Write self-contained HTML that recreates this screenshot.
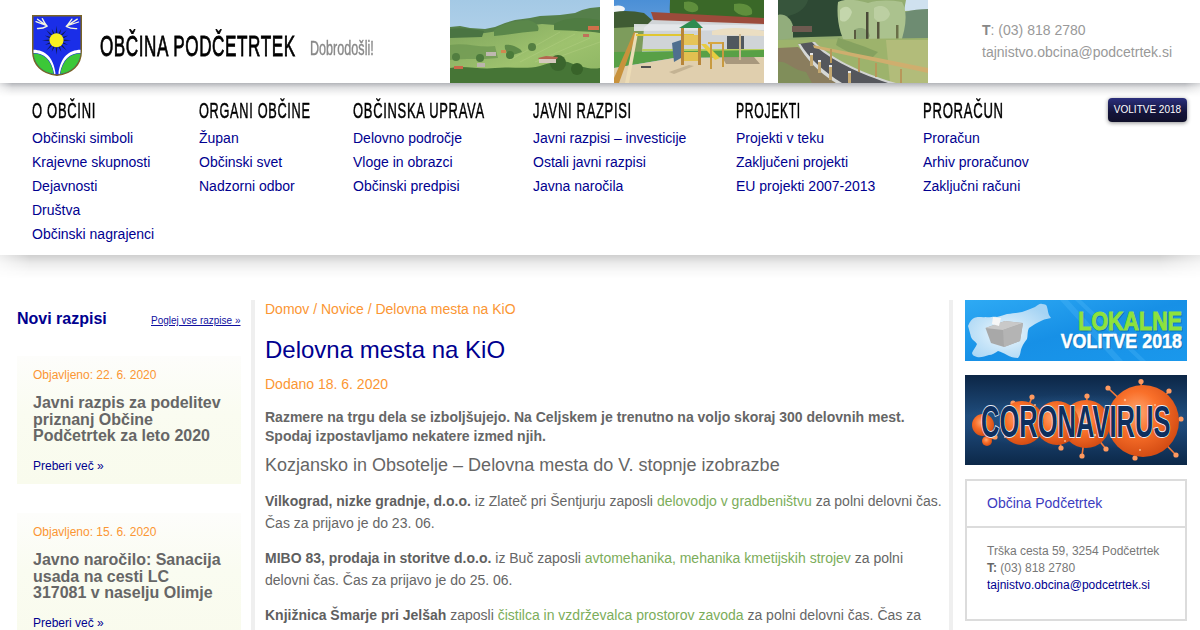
<!DOCTYPE html>
<html><head><meta charset="utf-8">
<style>
*{margin:0;padding:0;box-sizing:border-box}
html,body{width:1200px;height:630px;overflow:hidden;background:#fff;font-family:"Liberation Sans",sans-serif}
.a{position:absolute;white-space:nowrap}
.osw{font-family:"Liberation Sans",sans-serif;transform-origin:0 0;display:inline-block}
#hdr{position:absolute;left:0;top:0;width:1200px;height:83px;background:#fff;z-index:3}
#hshadow{position:absolute;left:0;top:83px;width:1200px;height:14px;z-index:3;background:linear-gradient(rgba(10,15,30,.31),rgba(10,15,30,.12) 35%,rgba(0,0,0,.03) 75%,rgba(0,0,0,0));-webkit-mask-image:linear-gradient(90deg,rgba(0,0,0,.4),#000 12px,#000 1185px,rgba(0,0,0,.5))}
#nav{position:absolute;left:0;top:83px;width:1200px;height:172px;background:#fff;z-index:2}
#nshadow{position:absolute;left:0;top:255px;width:1200px;height:24px;z-index:2;background:linear-gradient(rgba(0,0,0,.19),rgba(0,0,0,.08) 35%,rgba(0,0,0,.025) 70%,rgba(0,0,0,0));-webkit-mask-image:linear-gradient(90deg,rgba(0,0,0,.35),#000 30px,#000 1160px,rgba(0,0,0,.45))}
.nh{position:absolute;top:0;font-size:22px;color:#000}
.nl{position:absolute;font-size:14px;color:#00008f;line-height:24px}
.box{position:absolute;left:17px;width:224px;height:128px;background:linear-gradient(#fdfdfb,#fafcf1 45%,#f9fbed)}
.obj{position:absolute;left:16px;top:12px;font-size:12px;color:#fb9633;line-height:14px;white-space:nowrap}
.bt{position:absolute;left:16px;top:39px;font-size:16px;font-weight:700;color:#666;line-height:16.6px;white-space:nowrap}
.pv{position:absolute;left:16px;top:103px;font-size:12px;color:#00008f;line-height:14px;white-space:nowrap}
.mp{position:absolute;left:265px;width:682px;font-size:14px;color:#666;line-height:22px}
.mp b{color:#5f5f5f}
.g{color:#7cad5a}
</style></head><body>
<div id="hdr">
  <svg class="a" style="left:32px;top:15px" width="50" height="61" viewBox="0 0 50 61">
<path d="M0.75,0.75 H49.25 V36 C49.25,50 40,58.5 25,60.25 C10,58.5 0.75,50 0.75,36 Z" fill="#1a2ee8" stroke="#7a6424" stroke-width="1.5"/>
<path d="M31.00,26.20 L39.00,25.30 L31.00,24.40Z M30.16,28.62 L36.05,30.08 L30.85,26.96Z M28.46,30.53 L34.75,35.55 L29.73,29.26Z M26.16,31.65 L29.28,36.85 L27.82,30.96Z M23.60,31.80 L24.50,39.80 L25.40,31.80Z M21.18,30.96 L19.72,36.85 L22.84,31.65Z M19.27,29.26 L14.25,35.55 L20.54,30.53Z M18.15,26.96 L12.95,30.08 L18.84,28.62Z M18.00,24.40 L10.00,25.30 L18.00,26.20Z M18.84,21.98 L12.95,20.52 L18.15,23.64Z M20.54,20.07 L14.25,15.05 L19.27,21.34Z M22.84,18.95 L19.72,13.75 L21.18,19.64Z M25.40,18.80 L24.50,10.80 L23.60,18.80Z M27.82,19.64 L29.28,13.75 L26.16,18.95Z M29.73,21.34 L34.75,15.05 L28.46,20.07Z M30.85,23.64 L36.05,20.52 L30.16,21.98Z " fill="#101a50"/>
<circle cx="24.5" cy="25.3" r="7" fill="#f8f020"/>
<path d="M1.5,34.8 C13,35 21.5,42 23.6,58.8 L22.2,59 C19.5,44 12,38.2 1.5,38Z" fill="#fff"/>
<path d="M48.5,34.8 C37,35 28.5,42 26.4,58.8 L27.8,59 C30.5,44 38,38.2 48.5,38Z" fill="#fff"/>
<path d="M1.5,38.6 C12,38.8 19,44.5 21.8,59 C11,57.5 2.5,50 1.5,38.6Z" fill="#3cc838"/>
<path d="M48.5,38.6 C38,38.8 31,44.5 28.2,59 C39,57.5 47.5,50 48.5,38.6Z" fill="#3cc838"/>
<g fill="none" stroke="#f4f6e0" stroke-width="1.3" stroke-linecap="round">
<path d="M15.2,11.1 C13,9 11.5,6 10.3,3.6 M15.2,11.1 L5.5,4.2 M13.5,10.2 L4,6.6 M15.2,11.1 C12,13 8,13.6 5.5,13.5"/>
<path d="M34.2,11.4 C36.5,9 38.5,6 39.9,4.1 M34.2,11.4 L45.3,4.1 M36,10.3 L46.6,7 M34.2,11.4 C37.5,13.3 41.5,13.8 44.7,13.7"/>
</g>
</svg>
  <div class="a" style="left:100px;top:29px"><span class="osw" style="font-size:30px;-webkit-text-stroke:.8px #000;letter-spacing:1px;transform:scaleX(.57)">OBČINA PODČETRTEK</span></div>
  <div class="a" style="left:310px;top:37px"><span class="osw" style="font-size:20px;color:#888;-webkit-text-stroke:.4px #888;transform:scaleX(.63)">Dobrodošli!</span></div>
  <svg class="a" style="left:450px;top:0" width="150" height="83" viewBox="0 0 150 83">
<defs><linearGradient id="sk1" x1="0" y1="0" x2="0" y2="1"><stop offset="0" stop-color="#a4c9e5"/><stop offset="1" stop-color="#c0daee"/></linearGradient>
<linearGradient id="hl1" x1="0" y1="0" x2="1" y2="1"><stop offset="0" stop-color="#7ea45c"/><stop offset=".55" stop-color="#9ec26e"/><stop offset="1" stop-color="#8cb462"/></linearGradient></defs>
<rect width="150" height="83" fill="url(#sk1)"/>
<path d="M0,27 L10,26 L20,28 L35,29 L45,27 L55,23 L65,20 L80,18 L90,16 L110,15 L125,13 L132,10 L140,8 L150,7 L150,45 L0,45Z" fill="#557f4a"/>
<path d="M0,37 L20,34 L35,33 L48,31 L60,28 L75,26 L92,24 L105,25 L120,27 L135,29 L150,30 L150,83 L0,83Z" fill="url(#hl1)"/>
<path d="M0,29 C10,27 22,29 34,31 L32,37 L0,38Z" fill="#4a7442"/>
<path d="M44,30 C52,24 62,21 78,20 C86,22 90,26 88,31 C72,32 58,35 44,36Z" fill="#5a874a"/>
<path d="M104,24 C114,18 128,16 150,20 L150,33 C138,31 122,31 104,30Z" fill="#4f7c42"/>
<g stroke="#b4d084" stroke-width="1" opacity=".45"><line x1="60" y1="60" x2="110" y2="32"/><line x1="70" y1="62" x2="125" y2="34"/><line x1="85" y1="62" x2="140" y2="38"/><line x1="100" y1="60" x2="150" y2="42"/></g>
<path d="M0,45 C15,42 30,48 45,46 L48,58 C30,60 15,58 0,60Z" fill="#6f9852" opacity=".8"/>
<path d="M55,45 C62,44 70,48 72,52 L60,56 C56,52 54,48 55,45Z" fill="#5e8a48"/>
<path d="M0,68 C15,65 30,70 45,68 C60,66 75,70 90,66 C100,63 108,60 118,62 C128,66 140,70 150,68 L150,83 L0,83Z" fill="#467536"/>
<circle cx="108" cy="63" r="8" fill="#3b662d"/><circle cx="127" cy="69" r="6" fill="#386329"/><circle cx="60" cy="55" r="4" fill="#4a7a3a"/><circle cx="30" cy="58" r="4" fill="#4c7a3c"/><circle cx="6" cy="57" r="4" fill="#527e40"/><circle cx="82" cy="47" r="4" fill="#557f42"/>
<rect x="89" y="58" width="17" height="5" fill="#d4c8bc"/><path d="M88,58 L96,56 L108,57 L107,59 L89,59Z" fill="#b46650"/>
<rect x="138" y="26" width="11" height="4" fill="#d0704a"/><rect x="4" y="66" width="9" height="3" fill="#c8664a"/><rect x="27" y="63" width="8" height="4" fill="#bbb4ac"/><rect x="36" y="52" width="10" height="4" fill="#bfb8b0"/><rect x="51" y="50" width="5" height="3" fill="#d08850"/><rect x="133" y="34" width="6" height="3" fill="#c0705a"/>
</svg>
<svg class="a" style="left:614px;top:0" width="150" height="83" viewBox="0 0 150 83">
<defs><linearGradient id="sk2" x1="0" y1="0" x2="0" y2="1"><stop offset="0" stop-color="#4b8fd6"/><stop offset="1" stop-color="#8fbbe6"/></linearGradient></defs>
<rect width="150" height="83" fill="url(#sk2)"/>
<ellipse cx="4" cy="9" rx="7" ry="3.5" fill="#f2f5f8"/>
<path d="M56,0 L150,0 L150,22 L57,20 C55,12 56,6 56,0Z" fill="#3a6828"/>
<path d="M70,2 C78,0 86,4 84,10 C80,14 72,12 70,8Z M120,4 C130,2 140,6 138,14 C132,18 122,14 120,10Z" fill="#5f8f3c"/>
<path d="M0,12 C10,10 20,11 30,13 L38,20 L38,32 L0,34Z" fill="#3f5b33"/>
<path d="M0,28 L36,26 L36,52 L0,54Z" fill="#7d9c5c"/>
<path d="M37,12 L150,18 L150,25 L40,21Z" fill="#9c4b3b"/>
<path d="M38,20 L150,24 L150,50 L28,52 L30,28Z" fill="#d0d4d7"/>
<path d="M20,24 L150,25 L150,30 L20,31Z" fill="#e6e9ec" opacity=".9"/>
<rect x="113" y="36" width="17" height="13" fill="#50585e"/>
<rect x="28" y="49" width="122" height="2" fill="#b8d060"/>
<path d="M0,52 L150,50 L150,57 L60,58 L0,68Z" fill="#58a046"/>
<path d="M0,68 L60,58 L150,57 L150,83 L0,83Z" fill="#e0cfae"/>
<path d="M108,57 L140,57 L146,64 L112,64Z" fill="#9a8a70" opacity=".8"/>
<path d="M55,72 L75,65 L80,66 L60,74Z" fill="#b8a688" opacity=".7"/>
<path d="M0,78 L20,32 L23,33 L5,83 L0,83Z" fill="#c8923c"/>
<path d="M11,83 L21,33 L24,33 L15,83Z" fill="#ecdcb6"/>
<rect x="22" y="34" width="58" height="2" fill="#e0c630"/>
<rect x="27" y="66" width="10" height="2" fill="#505050"/>
<path d="M65,28 L80,19 L89,28Z" fill="#2f8c50"/>
<rect x="67" y="28" width="3" height="37" fill="#b8863a"/><rect x="84" y="28" width="3" height="37" fill="#b8863a"/>
<rect x="70" y="35" width="14" height="10" fill="#e6c458"/><rect x="70" y="52" width="14" height="9" fill="#e2c050"/>
<path d="M58,43 L67,40 L67,58 L60,62Z" fill="#4f6f8f"/>
<path d="M87,44 L92,44 L106,58 L101,60Z" fill="#e8cc40"/>
<rect x="94" y="42" width="16" height="2" fill="#d8a840"/><rect x="108" y="42" width="2" height="25" fill="#c89a40"/><rect x="96" y="44" width="2" height="25" fill="#c89a40"/>
<path d="M98,31 C110,27 132,27 150,31 L150,36 L98,35Z" fill="#ebdec2"/>
<rect x="125" y="34" width="2" height="26" fill="#cdb890"/>
</svg>
<svg class="a" style="left:778px;top:0" width="150" height="83" viewBox="0 0 150 83">
<rect width="150" height="83" fill="#93ad70"/>
<path d="M0,0 L72,0 L66,36 L0,38Z" fill="#2e4934"/>
<path d="M0,0 L30,0 C28,8 20,14 10,16 L0,16Z" fill="#37553c"/>
<path d="M128,0 L150,0 L150,10 L126,11Z" fill="#cfe1ef"/>
<path d="M104,22 C118,13 134,9 150,9 L150,42 L104,42Z" fill="#6e8c72"/>
<path d="M60,2 C68,-2 80,0 90,3 C100,0 112,0 124,2 C130,12 128,28 122,45 L100,50 L72,48 C62,40 58,18 60,2Z" fill="#abc28e"/>
<path d="M62,10 C66,5 72,6 74,12 C72,20 66,24 62,20Z" fill="#c4d6ac"/>
<path d="M96,8 C102,4 110,6 112,14 C110,22 100,24 96,18Z" fill="#bccfa2"/>
<path d="M76,30 C82,26 90,28 92,36 C88,42 80,44 76,40Z" fill="#8fa878"/>
<path d="M0,15 C6,13 13,18 15,26 L15,38 L0,40Z" fill="#92ad7c"/>
<rect x="14" y="26" width="20" height="6" fill="#6e5a50"/>
<rect x="88" y="12" width="2.5" height="52" fill="#4a4a38"/><rect x="99" y="22" width="2.5" height="40" fill="#55553c"/><rect x="118" y="25" width="2.5" height="34" fill="#6a7048"/><rect x="76" y="30" width="2" height="25" fill="#5a5a40"/>
<path d="M0,40 L150,38 L150,83 L0,83Z" fill="#9db36c"/>
<path d="M108,40 L150,40 L150,83 L112,83Z" fill="#b2bc7a"/>
<path d="M60,38 C75,42 90,48 100,52 L92,60 C78,56 66,50 58,45Z" fill="#7a9a5a" opacity=".7"/>
<path d="M0,48 L20,47 L60,83 L0,83Z" fill="#8a7d5e"/>
<path d="M0,62 C8,60 15,70 28,72 L34,83 L0,83Z" fill="#7a9a58" opacity=".6"/>
<path d="M20,44 L35,42 C46,55 72,70 112,83 L62,83 C46,72 30,58 20,44Z" fill="#55575c"/>
<path d="M34,42 L37,42 C50,56 80,72 118,83 L110,83 C74,71 46,56 34,42Z" fill="#d2d4d2"/>
<path d="M20,44 L22.5,44 C30,57 46,72 64,83 L58,83 C40,72 27,58 20,44Z" fill="#d6d8d6"/>
<path d="M35,45 L150,68 L150,73 L36,48Z" fill="#cfae6e"/>
<rect x="52" y="49" width="2" height="14" fill="#b8975a"/><rect x="80" y="58" width="2" height="14" fill="#b8975a"/><rect x="97" y="63" width="2" height="14" fill="#b8975a"/><rect x="122" y="69" width="2" height="14" fill="#b8975a"/>
<rect x="32" y="54" width="3" height="12" fill="#c4a870"/><rect x="40" y="61" width="3" height="12" fill="#c4a870"/><rect x="51" y="66" width="3" height="14" fill="#c4a870"/><rect x="70" y="72" width="3" height="11" fill="#c4a870"/>
<rect x="32" y="53" width="3" height="2" fill="#e8e8e8"/><rect x="40" y="60" width="3" height="2" fill="#e8e8e8"/><rect x="51" y="65" width="3" height="2" fill="#e8e8e8"/><rect x="70" y="71" width="3" height="2" fill="#e8e8e8"/>
</svg>
  <div class="a" style="left:982px;top:19px;font-size:14px;color:#999;line-height:22px"><b style="color:#888">T</b>: (03) 818 2780<br>tajnistvo.obcina@podcetrtek.si</div>
</div>
<div id="hshadow"></div>
<div id="nav">
<div class="a" style="left:32px;top:15px"><span class="osw" style="font-size:22px;-webkit-text-stroke:.5px #000;letter-spacing:1.2px;transform:scaleX(0.5894)">O OBČINI</span></div>
<div class="nl" style="left:32px;top:43px">Občinski simboli<br>Krajevne skupnosti<br>Dejavnosti<br>Društva<br>Občinski nagrajenci</div>
<div class="a" style="left:199px;top:15px"><span class="osw" style="font-size:22px;-webkit-text-stroke:.5px #000;letter-spacing:1.2px;transform:scaleX(0.5792)">ORGANI OBČINE</span></div>
<div class="nl" style="left:199px;top:43px">Župan<br>Občinski svet<br>Nadzorni odbor</div>
<div class="a" style="left:353px;top:15px"><span class="osw" style="font-size:22px;-webkit-text-stroke:.5px #000;letter-spacing:1.2px;transform:scaleX(0.5888)">OBČINSKA UPRAVA</span></div>
<div class="nl" style="left:353px;top:43px">Delovno področje<br>Vloge in obrazci<br>Občinski predpisi</div>
<div class="a" style="left:533px;top:15px"><span class="osw" style="font-size:22px;-webkit-text-stroke:.5px #000;letter-spacing:1.2px;transform:scaleX(0.5886)">JAVNI RAZPISI</span></div>
<div class="nl" style="left:533px;top:43px">Javni razpisi – investicije<br>Ostali javni razpisi<br>Javna naročila</div>
<div class="a" style="left:736px;top:15px"><span class="osw" style="font-size:22px;-webkit-text-stroke:.5px #000;letter-spacing:1.2px;transform:scaleX(0.5541)">PROJEKTI</span></div>
<div class="nl" style="left:736px;top:43px">Projekti v teku<br>Zaključeni projekti<br>EU projekti 2007-2013</div>
<div class="a" style="left:923px;top:15px"><span class="osw" style="font-size:22px;-webkit-text-stroke:.5px #000;letter-spacing:1.2px;transform:scaleX(0.5964)">PRORAČUN</span></div>
<div class="nl" style="left:923px;top:43px">Proračun<br>Arhiv proračunov<br>Zaključni računi</div>
<div class="a" id="vol" style="left:1108px;top:15px;width:79px;height:24px;border-radius:4px;background:linear-gradient(#2b2f7c,#14143a 60%,#10102a);box-shadow:0 1px 4px rgba(0,0,0,.45);color:#fff;font-size:10px;line-height:24px;text-align:center">VOLITVE 2018</div>
</div>
<div id="nshadow"></div>
<div class="a" style="left:251px;top:300px;width:4px;height:330px;background:#efefef"></div>
<div class="a" style="left:949px;top:300px;width:4px;height:330px;background:#efefef"></div>
<!-- left sidebar -->
<div class="a" style="left:17px;top:309px;font-size:16px;font-weight:700;color:#00008f;line-height:20px">Novi razpisi</div>
<div class="a" style="left:151px;top:314px;font-size:10px;color:#1010a0;line-height:14px;text-decoration:underline">Poglej vse razpise »</div>
<div class="box" style="top:356px">
 <div class="obj">Objavljeno: 22. 6. 2020</div>
 <div class="bt">Javni razpis za podelitev<br>priznanj Občine<br>Podčetrtek za leto 2020</div>
 <div class="pv">Preberi več »</div>
</div>
<div class="box" style="top:513px">
 <div class="obj">Objavljeno: 15. 6. 2020</div>
 <div class="bt">Javno naročilo: Sanacija<br>usada na cesti LC<br>317081 v naselju Olimje</div>
 <div class="pv">Preberi več »</div>
</div>
<!-- main -->
<div class="a" style="left:265px;top:300px;font-size:14px;color:#fb9633;line-height:18px">Domov / Novice / Delovna mesta na KiO</div>
<div class="a" style="left:265px;top:335px;font-size:24px;color:#00008f;line-height:30px">Delovna mesta na KiO</div>
<div class="a" style="left:265px;top:375px;font-size:14px;color:#fb9633;line-height:18px">Dodano 18. 6. 2020</div>
<div class="a" style="left:265px;top:408px;font-size:14px;font-weight:700;color:#666;line-height:19px">Razmere na trgu dela se izboljšujejo. Na Celjskem je trenutno na voljo skoraj 300 delovnih mest.<br>Spodaj izpostavljamo nekatere izmed njih.</div>
<div class="a" style="left:265px;top:454px;font-size:18px;color:#666;line-height:22px">Kozjansko in Obsotelje – Delovna mesta do V. stopnje izobrazbe</div>
<div class="mp" style="top:490px"><b>Vilkograd, nizke gradnje, d.o.o.</b> iz Zlateč pri Šentjurju zaposli <span class="g">delovodjo v gradbeništvu</span> za polni delovni čas. Čas za prijavo je do 23. 06.</div>
<div class="mp" style="top:547px"><b>MIBO 83, prodaja in storitve d.o.o.</b> iz Buč zaposli <span class="g">avtomehanika, mehanika kmetijskih strojev</span> za polni delovni čas. Čas za prijavo je do 25. 06.</div>
<div class="mp" style="top:604px"><b>Knjižnica Šmarje pri Jelšah</b> zaposli <span class="g">čistilca in vzdrževalca prostorov zavoda</span> za polni delovni čas. Čas za prijavo je do 26. 06.</div>


<!-- right sidebar -->
<svg class="a" style="left:965px;top:300px" width="222" height="61" viewBox="0 0 222 61">
<defs>
<linearGradient id="b1g" x1="0" y1="0" x2="1" y2="1"><stop offset="0" stop-color="#2eaaf4"/><stop offset=".5" stop-color="#1790e6"/><stop offset="1" stop-color="#1a98ec"/></linearGradient>
<radialGradient id="mapg" cx=".45" cy=".55" r=".6"><stop offset="0" stop-color="#f0f8fd"/><stop offset=".55" stop-color="#c4e3f8"/><stop offset="1" stop-color="#a6d4f4"/></radialGradient>
</defs>
<rect width="222" height="61" fill="url(#b1g)"/>
<path d="M95,0 L150,61 L158,61 L103,0Z M110,0 L175,61 L181,61 L116,0Z" fill="#5cc0fa" opacity=".25"/>
<path d="M3,26 C5,21 7,19 9,18 C14,16 17,18 20.5,17 C25,18 28,16 32,17 C36,16 39,15 42,14 C48,13 52,13 57,12 C62,10 66,9 70,7 C73,5 75,3 77,4 C80,4 82,5 82,7 C83,10 83,13 84,15 L86,18 C83,19 80,19 77,20.5 C72,23 68,25 64,28 C62,32 63,36 62,39 C60,42 58,44 57,47 C55,51 56,55 53,58 C49,58 45,57 42,55 C39,53 36,52 33,51 C30,53 27,55 24,55 C20,56 16,58 12,57 C9,56 7,55 7,53 C8,50 11,47 12,44 C10,41 7,40 6,37 C5,33 4,29 3,26Z" fill="url(#mapg)"/>
<path d="M20.5,28 L40,21 L58,23 L55,41 L39,47 L26,43Z" fill="#a8a8a8"/>
<path d="M20.5,28 L40,21 L58,23 L38,30Z" fill="#c9c9c9"/>
<path d="M38,30 L58,23 L55,41 L39,47Z" fill="#b4b4b4"/>
<path d="M28,17 L36,18 L34,26 L27,24Z" fill="#f6f6f6"/>
<g transform="translate(1 1)" opacity=".35"><text x="217" y="30" text-anchor="end" font-family="Liberation Sans" font-weight="700" font-size="26" fill="#003a70" stroke="#003a70" stroke-width="1" transform="translate(217 0) scale(.825 1) translate(-217 0)">LOKALNE</text>
<text x="217" y="48" text-anchor="end" font-family="Liberation Sans" font-weight="700" font-size="20" fill="#003a70" stroke="#003a70" stroke-width=".5" transform="translate(217 0) scale(.895 1) translate(-217 0)">VOLITVE 2018</text></g>
<text x="217" y="30" text-anchor="end" font-family="Liberation Sans" font-weight="700" font-size="26" fill="#8ee23c" stroke="#8ee23c" stroke-width="1" transform="translate(217 0) scale(.825 1) translate(-217 0)">LOKALNE</text>
<text x="217" y="48" text-anchor="end" font-family="Liberation Sans" font-weight="700" font-size="20" fill="#fff" stroke="#fff" stroke-width=".5" transform="translate(217 0) scale(.895 1) translate(-217 0)">VOLITVE 2018</text>
</svg>
<svg class="a" style="left:965px;top:375px" width="222" height="90" viewBox="0 0 222 90">
<defs>
<linearGradient id="b2g" x1="0" y1="0" x2="0" y2="1"><stop offset="0" stop-color="#0c2646"/><stop offset=".45" stop-color="#1f4c7c"/><stop offset=".6" stop-color="#1c4676"/><stop offset="1" stop-color="#0c2848"/></linearGradient>
<radialGradient id="glow" cx=".5" cy=".5" r=".5"><stop offset="0" stop-color="#3a70a8" stop-opacity=".55"/><stop offset="1" stop-color="#3a70a8" stop-opacity="0"/></radialGradient>
<radialGradient id="vg" cx=".42" cy=".38" r=".65"><stop offset="0" stop-color="#ffa772"/><stop offset=".45" stop-color="#f9702a"/><stop offset="1" stop-color="#d24a12"/></radialGradient>
</defs>
<rect width="222" height="90" fill="url(#b2g)"/>
<ellipse cx="111" cy="47" rx="115" ry="28" fill="url(#glow)"/>
<g stroke="#f47a3a" stroke-width="1.6"><line x1="153.9" y1="23.3" x2="143" y2="13"/><line x1="176.3" y1="12.9" x2="176" y2="6.5"/><line x1="199.7" y1="21.0" x2="204" y2="16"/><line x1="64.3" y1="29.1" x2="67" y2="22"/><line x1="121.8" y1="26.9" x2="122" y2="21"/><line x1="95.2" y1="68.0" x2="96" y2="73"/><line x1="118.3" y1="70.9" x2="117" y2="81"/><line x1="134.8" y1="66.2" x2="141" y2="74"/><line x1="171.0" y1="78.4" x2="170" y2="83"/><line x1="201.1" y1="69.8" x2="211" y2="80"/><line x1="211.1" y1="44.3" x2="216" y2="44"/><line x1="48.7" y1="29.5" x2="48" y2="28"/><line x1="26.1" y1="63.9" x2="30" y2="62"/><line x1="153.2" y1="24.0" x2="160" y2="30"/><line x1="192.8" y1="75.6" x2="190" y2="70"/></g>
<g fill="#ff9a60"><circle cx="143" cy="13" r="2.6"/><circle cx="176" cy="6.5" r="2.6"/><circle cx="204" cy="16" r="2.6"/><circle cx="67" cy="22" r="2.6"/><circle cx="122" cy="21" r="2.6"/><circle cx="96" cy="73" r="2.6"/><circle cx="117" cy="81" r="2.6"/><circle cx="141" cy="74" r="2.6"/><circle cx="170" cy="83" r="2.6"/><circle cx="211" cy="80" r="2.6"/><circle cx="216" cy="44" r="2.6"/><circle cx="48" cy="28" r="2.6"/><circle cx="30" cy="62" r="2.6"/><circle cx="160" cy="30" r="2.6"/><circle cx="190" cy="70" r="2.6"/></g>
<g fill="url(#vg)"><circle cx="178" cy="46" r="36"/><circle cx="121" cy="49" r="24"/><circle cx="92" cy="48" r="22"/><circle cx="57" cy="48" r="22"/><circle cx="18" cy="50" r="11"/><circle cx="22" cy="66" r="5"/></g>
<g fill="#ffc9a0" opacity=".8"><circle cx="160" cy="25" r="1.2"/><circle cx="190" cy="30" r="1"/><circle cx="130" cy="60" r="1.2"/><circle cx="100" cy="66" r="1"/><circle cx="70" cy="30" r="1"/><circle cx="200" cy="58" r="1.2"/><circle cx="175" cy="75" r="1"/><circle cx="40" cy="62" r="1"/></g>
<text x="16" y="62" font-family="Liberation Sans" font-weight="700" font-size="44" fill="#0e2f5e" stroke="#e8eef8" stroke-width="1.8" paint-order="stroke" transform="translate(16 0) scale(.58 1) translate(-16 0)">CORONAVIRUS</text>
</svg>
<div class="a" style="left:965px;top:479px;width:222px;height:142px;border:2px solid #dcdcdc"></div>
<div class="a" style="left:967px;top:526px;width:218px;height:2px;background:#dcdcdc"></div>
<div class="a" style="left:987px;top:494px;font-size:14px;color:#3c3cc0;line-height:18px">Občina Podčetrtek</div>
<div class="a" style="left:987px;top:543px;font-size:12px;color:#777;line-height:17px">Trška cesta 59, 3254 Podčetrtek<br><b style="color:#666">T:</b> (03) 818 2780<br><span style="color:#00008f">tajnistvo.obcina@podcetrtek.si</span></div>
</body></html>
